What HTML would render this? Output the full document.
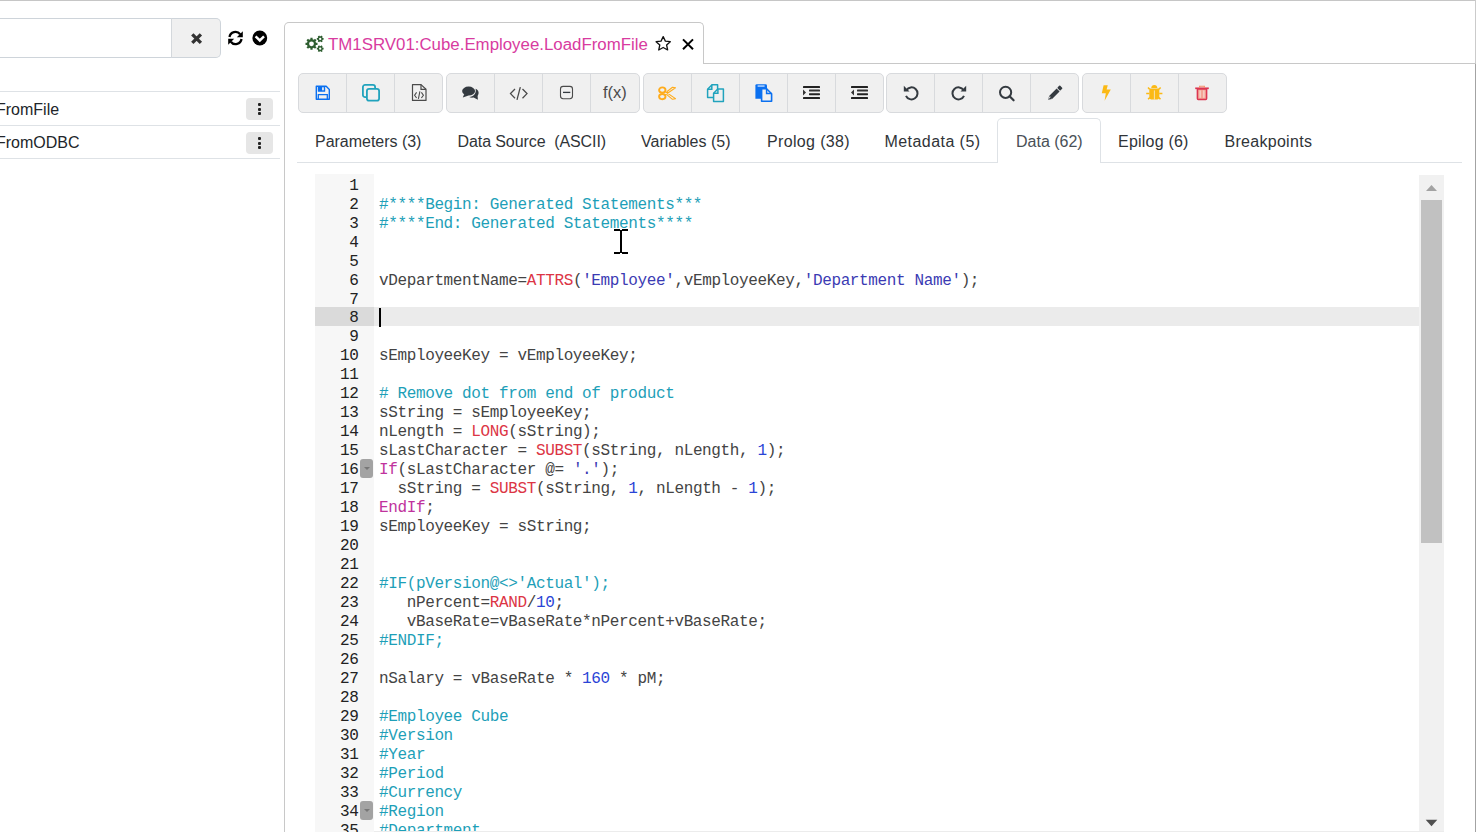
<!DOCTYPE html>
<html><head><meta charset="utf-8">
<style>
*{box-sizing:border-box;margin:0;padding:0}
html,body{width:1476px;height:832px;overflow:hidden;background:#fff;position:relative;font-family:"Liberation Sans",sans-serif;color:#212529}
.a{position:absolute}
.topline{left:0;top:0;width:1476px;height:1px;background:#c6c6c6}
.search{left:-200px;top:18px;width:372px;height:40px;border:1px solid #ced4da;background:#fff}
.xbtn{left:171px;top:18px;width:50px;height:40px;border:1px solid #ced4da;border-left:1px solid #d4d8dc;background:#f0f0f0;border-radius:0 5px 5px 0}
.rowline{left:0;width:280px;height:1px;background:#dee2e6}
.rowtxt{left:-4px;margin-top:1px;font-size:16px;line-height:20px;white-space:pre;color:#212529}
.kebab{left:246px;width:27px;height:22px;background:#e6e6e6;border-radius:4px}
.kebab i{position:absolute;left:12px;width:3px;height:3px;background:#222;border-radius:1px}
.panelL{left:284px;top:63px;width:1px;height:769px;background:#c8c8c8}
.panelR{left:1475px;top:63px;width:1px;height:769px;background:#a3a3a3}.panelR2{left:1475px;top:0;width:1px;height:63px;background:#cbcbcb}
.panelT{left:703px;top:63px;width:773px;height:1px;background:#c8c8c8}
.tab{left:284px;top:22px;width:420px;height:42px;border:1px solid #c8c8c8;border-bottom:none;border-radius:5px 5px 0 0;background:#fff}
.title{left:328px;top:35px;font-size:16.85px;line-height:20px;color:#d83ba0;white-space:pre}
.grp{top:73px;height:40px;background:#f0f0f0;border:1px solid #d8dadd;border-radius:5px}
.div{top:74px;width:1px;height:38px;background:#d8dadd}
.navline{left:297px;top:162px;width:1165px;height:1px;background:#dee2e6}
.acttab{left:997px;top:118px;width:104px;height:45px;border:1px solid #dee2e6;border-bottom:none;border-radius:5px 5px 0 0;background:#fff}
.ntab{top:132px;font-size:16px;line-height:19px;white-space:pre;color:#303438}
.gutter{left:315px;top:174px;width:59px;height:658px;background:#f7f7f7}
.hlg{left:315px;top:307px;width:59px;height:19px;background:#dadada}
.hlc{left:374px;top:307px;width:1045px;height:19px;background:#ebebeb}
.ln{left:315px;width:43.4px;text-align:right;font-family:"Liberation Mono",monospace;font-size:16px;letter-spacing:-0.37px;line-height:19px;color:#222;white-space:pre}
.cl{left:379px;font-family:"Liberation Mono",monospace;font-size:16px;letter-spacing:-0.37px;line-height:19px;color:#444;white-space:pre}
.c{color:#1e9fb8}.f{color:#dc3545}.s{color:#3b3bb3}.n{color:#2a44d6}.k{color:#c0339d}
.fold{left:360px;width:13px;height:19px;background:#a3a3a3;border-radius:3px}
.fold:after{content:"";position:absolute;left:3.8px;top:7.5px;border-left:3.5px solid transparent;border-right:3.5px solid transparent;border-top:3.5px solid #777}
.sbtrack{left:1419px;top:175px;width:25px;height:656px;background:#f1f1f1}
.sbthumb{left:1421px;top:200px;width:21px;height:343px;background:#c1c1c1}
</style></head><body>
<div class="a topline"></div>
<!-- left sidebar -->
<div class="a search"></div>
<div class="a xbtn"></div>
<svg class="a" style="left:190px;top:32px" width="13" height="13" viewBox="0 0 13 13"><path d="M2.3 2.3L10.9 10.9M10.9 2.3L2.3 10.9" stroke="#333" stroke-width="3.3"/></svg>
<svg class="a" style="left:227px;top:30px" width="17" height="16" viewBox="0 0 17 16"><path d="M2.5 7 A6 6 0 0 1 13.2 4.2" fill="none" stroke="#000" stroke-width="2.3"/><path d="M15.8 1.2V7.2H9.8Z" fill="#000"/><path d="M14.5 9 A6 6 0 0 1 3.8 11.8" fill="none" stroke="#000" stroke-width="2.3"/><path d="M1.2 14.8V8.8H7.2Z" fill="#000"/></svg>
<svg class="a" style="left:252px;top:30px" width="16" height="16" viewBox="0 0 16 16"><circle cx="7.8" cy="8" r="7.4" fill="#000"/><path d="M3.6 6.4L7.8 10.4L12 6.4" fill="none" stroke="#fff" stroke-width="2.5"/></svg>

<div class="a rowline" style="top:91px"></div>
<div class="a rowline" style="top:125px"></div>
<div class="a rowline" style="top:158px"></div>
<div class="a rowtxt" style="top:99px">FromFile</div>
<div class="a rowtxt" style="top:132px">FromODBC</div>
<div class="a kebab" style="top:98px"><i style="top:5px"></i><i style="top:9.5px"></i><i style="top:14px"></i></div>
<div class="a kebab" style="top:132px"><i style="top:5px"></i><i style="top:9.5px"></i><i style="top:14px"></i></div>

<!-- panel -->
<div class="a panelL"></div>
<div class="a panelR"></div><div class="a panelR2"></div>
<div class="a panelT"></div>
<div class="a tab"></div>
<!-- gears -->
<svg class="a" style="left:304px;top:35px" width="22" height="19" viewBox="0 0 22 19" id="gears"><path d="M11.97 7.71 L13.50 7.71 L13.50 9.89 L11.97 9.89 L11.75 10.56 L11.43 11.19 L12.52 12.27 L10.97 13.82 L9.89 12.73 L9.26 13.05 L8.59 13.27 L8.59 14.80 L6.41 14.80 L6.41 13.27 L5.74 13.05 L5.11 12.73 L4.03 13.82 L2.48 12.27 L3.57 11.19 L3.25 10.56 L3.03 9.89 L1.50 9.89 L1.50 7.71 L3.03 7.71 L3.25 7.04 L3.57 6.41 L2.48 5.33 L4.03 3.78 L5.11 4.87 L5.74 4.55 L6.41 4.33 L6.41 2.80 L8.59 2.80 L8.59 4.33 L9.26 4.55 L9.89 4.87 L10.97 3.78 L12.52 5.33 L11.43 6.41 L11.75 7.04Z M9.90 8.80 A2.4 2.4 0 1 0 5.10 8.80 A2.4 2.4 0 1 0 9.90 8.80Z M18.66 3.06 L19.59 3.04 L19.59 4.76 L18.66 4.74 L18.45 5.20 L18.16 5.61 L18.64 6.41 L17.15 7.27 L16.70 6.45 L16.20 6.50 L15.70 6.45 L15.25 7.27 L13.76 6.41 L14.24 5.61 L13.95 5.20 L13.74 4.74 L12.81 4.76 L12.81 3.04 L13.74 3.06 L13.95 2.60 L14.24 2.19 L13.76 1.39 L15.25 0.53 L15.70 1.35 L16.20 1.30 L16.70 1.35 L17.15 0.53 L18.64 1.39 L18.16 2.19 L18.45 2.60Z M17.35 3.90 A1.15 1.15 0 1 0 15.05 3.90 A1.15 1.15 0 1 0 17.35 3.90Z M18.66 12.86 L19.59 12.84 L19.59 14.56 L18.66 14.54 L18.45 15.00 L18.16 15.41 L18.64 16.21 L17.15 17.07 L16.70 16.25 L16.20 16.30 L15.70 16.25 L15.25 17.07 L13.76 16.21 L14.24 15.41 L13.95 15.00 L13.74 14.54 L12.81 14.56 L12.81 12.84 L13.74 12.86 L13.95 12.40 L14.24 11.99 L13.76 11.19 L15.25 10.33 L15.70 11.15 L16.20 11.10 L16.70 11.15 L17.15 10.33 L18.64 11.19 L18.16 11.99 L18.45 12.40Z M17.35 13.70 A1.15 1.15 0 1 0 15.05 13.70 A1.15 1.15 0 1 0 17.35 13.70Z" fill="#2e5e30" fill-rule="evenodd"/></svg>
<div class="a title">TM1SRV01:Cube.Employee.LoadFromFile</div>
<svg class="a" style="left:655px;top:35px" width="17" height="17" viewBox="0 0 17 17"><path d="M8.2 1.6L10.35 6.1L15.3 6.65L11.6 10L12.65 14.95L8.2 12.45L3.75 14.95L4.8 10L1.1 6.65L6.05 6.1Z" fill="none" stroke="#111" stroke-width="1.3" stroke-linejoin="round"/></svg>
<svg class="a" style="left:682px;top:38px" width="12" height="12" viewBox="0 0 12 12"><path d="M1 1.4L11 11.2M11 1.4L1 11.2" stroke="#000" stroke-width="2"/></svg>

<!-- toolbar -->
<div class="a grp" style="left:298px;width:145px"></div>
<div class="a div" style="left:346px"></div><div class="a div" style="left:394px"></div>
<div class="a grp" style="left:446px;width:194px"></div>
<div class="a div" style="left:494px"></div><div class="a div" style="left:542px"></div><div class="a div" style="left:590px"></div>
<div class="a grp" style="left:643px;width:241px"></div>
<div class="a div" style="left:691px"></div><div class="a div" style="left:739px"></div><div class="a div" style="left:787px"></div><div class="a div" style="left:835px"></div>
<div class="a grp" style="left:886px;width:193px"></div>
<div class="a div" style="left:934px"></div><div class="a div" style="left:982px"></div><div class="a div" style="left:1030px"></div>
<div class="a grp" style="left:1082px;width:145px"></div>
<div class="a div" style="left:1130px"></div><div class="a div" style="left:1178px"></div>
<svg class="a" style="left:315px;top:85px" width="16" height="16" viewBox="0 0 16 16"><path d="M1.3 1.3H11.2L14.3 4.4V14.3H1.3Z" fill="none" stroke="#0b70f0" stroke-width="1.4" stroke-linejoin="round"/><path d="M2.8 1.6H10.2V6.2Q10.2 6.8 9.6 6.8H3.4Q2.8 6.8 2.8 6.2Z" fill="#0b70f0"/><rect x="7.1" y="2.3" width="1.7" height="3" fill="#f0f0f0"/><path d="M3.3 14.2V9.7H12.3V14.2" fill="none" stroke="#0b70f0" stroke-width="1.3"/></svg><svg class="a" style="left:361px;top:83px" width="20" height="20" viewBox="0 0 20 20"><rect x="1.9" y="1.9" width="12.2" height="12.2" rx="2.2" fill="none" stroke="#21a3bd" stroke-width="1.8"/><rect x="5.9" y="5.9" width="12.2" height="11.8" rx="2.2" fill="#f0f0f0" stroke="#21a3bd" stroke-width="1.8"/></svg><svg class="a" style="left:411px;top:83px" width="17" height="19" viewBox="0 0 17 19"><path d="M1.5 1.6H10L15 6.3V17.4H1.5Z" fill="none" stroke="#4a4a4a" stroke-width="1.2" stroke-linejoin="round"/><path d="M10 1.6V6.3H15" fill="none" stroke="#4a4a4a" stroke-width="1.2"/><path d="M5.6 9.4L3.6 12.2L5.6 15M10.4 9.4L12.4 12.2L10.4 15M8.9 8.4L7.4 15.9" fill="none" stroke="#4a4a4a" stroke-width="1.1"/></svg><svg class="a" style="left:461px;top:86px" width="19" height="15" viewBox="0 0 19 15"><ellipse cx="7.6" cy="5.1" rx="6.5" ry="4.5" fill="#343a40"/><path d="M3.2 8L1.8 11.6L7.6 9.4Z" fill="#343a40"/><path d="M14.6 2.8C17.6 4 18.6 7.2 16.6 9.9L16.9 13.8L12.6 11.6C11 11.9 9.4 11.7 8.2 11C12.6 10.8 15.6 7.4 14.6 2.8Z" fill="#343a40"/></svg><svg class="a" style="left:509px;top:86px" width="20" height="15" viewBox="0 0 20 15"><path d="M6 3L1.5 7.6L6 12.2M13.5 3L18 7.6L13.5 12.2" fill="none" stroke="#4a4a4a" stroke-width="1.3"/><path d="M11.3 1.2L8 13.8" stroke="#4a4a4a" stroke-width="1.3"/></svg><svg class="a" style="left:559px;top:85px" width="15" height="15" viewBox="0 0 15 15"><rect x="1.5" y="1.4" width="12" height="12.3" rx="2.6" fill="none" stroke="#4a4a4a" stroke-width="1.1"/><path d="M4 7.4H11.3" stroke="#343a40" stroke-width="1.3"/></svg><div class="a" style="left:603px;top:82px;font-size:16.5px;line-height:20px;color:#4a4a4a;white-space:pre">f(x)</div><svg class="a" style="left:658px;top:86px" width="19" height="15" viewBox="0 0 19 15"><ellipse cx="4.3" cy="4" rx="3.2" ry="2.6" fill="none" stroke="#ffac1c" stroke-width="1.9"/><ellipse cx="4.3" cy="10.6" rx="3.2" ry="2.6" fill="none" stroke="#ffac1c" stroke-width="1.9"/><path d="M7 5.5L17.5 12.6L14.5 13.3L8.8 8.6M7 9L17.5 1.8L14.5 1.2L8.8 5.8" fill="none" stroke="#ffac1c" stroke-width="1.1" stroke-linejoin="round"/></svg><svg class="a" style="left:706px;top:83px" width="19" height="20" viewBox="0 0 19 20"><path d="M1.6 6.2L6 1.8H11.6V14.6H1.6Z" fill="none" stroke="#21a3bd" stroke-width="1.5" stroke-linejoin="round"/><path d="M1.6 6.2H5.8V1.8" fill="none" stroke="#21a3bd" stroke-width="1.5"/><path d="M7.6 10.2L11.8 5.9H17.4V18.4H7.6Z" fill="#f0f0f0" stroke="#21a3bd" stroke-width="1.5" stroke-linejoin="round"/><path d="M7.6 10.2H11.9V5.9" fill="none" stroke="#21a3bd" stroke-width="1.5"/></svg><svg class="a" style="left:754px;top:83px" width="20" height="20" viewBox="0 0 20 20"><path d="M1.4 2.6Q1.4 1.2 2.8 1.2H11.6Q13 1.2 13 2.6V15.7H1.4Z" fill="#0b70f0"/><rect x="3.6" y="2.4" width="7" height="1.3" fill="#cfe3ff"/><path d="M7.6 5.8H12.6L17.6 10.8V18.2H7.6Z" fill="#f0f0f0" stroke="#0b70f0" stroke-width="1.6" stroke-linejoin="round"/><path d="M12.6 5.8V10.6H17.6" fill="none" stroke="#0b70f0" stroke-width="1.5"/></svg><svg class="a" style="left:802px;top:85px" width="19" height="15" viewBox="0 0 19 15"><rect x="1" y="1" width="17" height="2" rx="0.6" fill="#222"/><rect x="7" y="4.6" width="11" height="2" rx="0.6" fill="#333"/><rect x="7" y="8.2" width="11" height="2" rx="0.6" fill="#222"/><rect x="1" y="12" width="17" height="2" rx="0.6" fill="#222"/><path d="M1 4.4L4 7.5L1 10.6Z" fill="#333"/></svg><svg class="a" style="left:850px;top:85px" width="19" height="15" viewBox="0 0 19 15"><rect x="1" y="1" width="17" height="2" rx="0.6" fill="#222"/><rect x="7" y="4.6" width="11" height="2" rx="0.6" fill="#333"/><rect x="7" y="8.2" width="11" height="2" rx="0.6" fill="#222"/><rect x="1" y="12" width="17" height="2" rx="0.6" fill="#222"/><path d="M4 4.4L1 7.5L4 10.6Z" fill="#333"/></svg><svg class="a" style="left:903px;top:85px" width="16" height="16" viewBox="0 0 16 16"><path d="M3.4 5.2A6 6 0 1 1 3 10.8" fill="none" stroke="#343a40" stroke-width="2"/><path d="M0.8 0.8V6.5H6.5Z" fill="#343a40"/></svg><svg class="a" style="left:951px;top:85px" width="16" height="16" viewBox="0 0 16 16"><path d="M12.6 5.2A6 6 0 1 0 13 10.8" fill="none" stroke="#343a40" stroke-width="2"/><path d="M15.2 0.8V6.5H9.5Z" fill="#343a40"/></svg><svg class="a" style="left:998px;top:85px" width="18" height="17" viewBox="0 0 18 17"><circle cx="7.6" cy="7.3" r="5.6" fill="none" stroke="#343a40" stroke-width="2"/><path d="M11.6 11.3L15.6 15.3" stroke="#343a40" stroke-width="2.2" stroke-linecap="round"/></svg><svg class="a" style="left:1047px;top:85px" width="16" height="16" viewBox="0 0 16 16"><g transform="translate(1.2 14.8) rotate(-45)"><path d="M0 0L3.4 -2.1V2.1Z" fill="#343a40"/><rect x="3.4" y="-2.1" width="10.6" height="4.2" fill="#343a40"/><rect x="14.8" y="-2.1" width="3.6" height="4.2" rx="0.8" fill="#343a40"/><path d="M1.2 -0.3L3.6 -1" stroke="#f0f0f0" stroke-width="0.8"/></g></svg><svg class="a" style="left:1101px;top:84px" width="11" height="18" viewBox="0 0 11 18"><path d="M2.6 1.2H6.8L5.6 5.6H9.8L3.6 16.8L4.8 9.3H0.8Z" fill="#fbb914"/></svg><svg class="a" style="left:1145px;top:84px" width="18" height="17" viewBox="0 0 18 17"><path d="M6.2 3.9Q6.5 1 9.3 1Q12.1 1 12.4 3.9Z" fill="#fbb914"/><path d="M4.3 4.4H14.3V13.2Q14.3 15.6 11 15.6H7.6Q4.3 15.6 4.3 13.2Z" fill="#fbb914"/><rect x="8.9" y="6.4" width="0.9" height="9.2" fill="#f6e7c0"/><path d="M4.6 5.2L3 3.4M14 5.2L15.6 3.4M4.4 9.4H1.2M14.2 9.4H17.4M4.8 13.4L3.1 15.3M13.8 13.4L15.5 15.3" stroke="#fbb914" stroke-width="1.5"/></svg><svg class="a" style="left:1194px;top:85px" width="16" height="16" viewBox="0 0 16 16"><path d="M1.2 3.3H14.8" stroke="#dc3652" stroke-width="1.7"/><path d="M5.6 3V1.3H10.4V3" fill="none" stroke="#f5906a" stroke-width="1.1"/><path d="M3.4 4V13.6Q3.4 14.4 4.2 14.4H11.8Q12.6 14.4 12.6 13.6V4Z" fill="#f4a495" stroke="#dc3652" stroke-width="1.5"/><path d="M6.1 5.4V12.8M9.9 5.4V12.8" stroke="#f7ede8" stroke-width="0.9"/></svg>

<!-- nav tabs -->
<div class="a navline"></div>
<div class="a acttab"></div>
<div class="a ntab" style="left:315px;letter-spacing:-0.02px">Parameters (3)</div>
<div class="a ntab" style="left:457.5px;letter-spacing:-0.09px">Data Source  (ASCII)</div>
<div class="a ntab" style="left:641px">Variables (5)</div>
<div class="a ntab" style="left:767px;letter-spacing:0.35px">Prolog (38)</div>
<div class="a ntab" style="left:884.5px;letter-spacing:0.44px">Metadata (5)</div>
<div class="a ntab" style="left:1016px;color:#495057">Data (62)</div>
<div class="a ntab" style="left:1118px;letter-spacing:0.21px">Epilog (6)</div>
<div class="a ntab" style="left:1224.5px;letter-spacing:0.29px">Breakpoints</div>

<!-- editor -->
<div class="a gutter"></div>
<div class="a hlg"></div>
<div class="a hlc"></div>
<div class="a ln" style="top:176.70px">1</div><div class="a ln" style="top:195.67px">2</div><div class="a cl" style="top:195.67px"><span class="c">#****Begin: Generated Statements***</span></div><div class="a ln" style="top:214.64px">3</div><div class="a cl" style="top:214.64px"><span class="c">#****End: Generated Statements****</span></div><div class="a ln" style="top:233.61px">4</div><div class="a ln" style="top:252.58px">5</div><div class="a ln" style="top:271.55px">6</div><div class="a cl" style="top:271.55px">vDepartmentName=<span class="f">ATTRS</span>(<span class="s">&#x27;Employee&#x27;</span>,vEmployeeKey,<span class="s">&#x27;Department Name&#x27;</span>);</div><div class="a ln" style="top:290.52px">7</div><div class="a ln" style="top:309.49px">8</div><div class="a ln" style="top:328.46px">9</div><div class="a ln" style="top:347.43px">10</div><div class="a cl" style="top:347.43px">sEmployeeKey = vEmployeeKey;</div><div class="a ln" style="top:366.40px">11</div><div class="a ln" style="top:385.37px">12</div><div class="a cl" style="top:385.37px"><span class="c"># Remove dot from end of product</span></div><div class="a ln" style="top:404.34px">13</div><div class="a cl" style="top:404.34px">sString = sEmployeeKey;</div><div class="a ln" style="top:423.31px">14</div><div class="a cl" style="top:423.31px">nLength = <span class="f">LONG</span>(sString);</div><div class="a ln" style="top:442.28px">15</div><div class="a cl" style="top:442.28px">sLastCharacter = <span class="f">SUBST</span>(sString, nLength, <span class="n">1</span>);</div><div class="a ln" style="top:461.25px">16</div><div class="a cl" style="top:461.25px"><span class="k">If</span>(sLastCharacter @= <span class="s">&#x27;.&#x27;</span>);</div><div class="a ln" style="top:480.22px">17</div><div class="a cl" style="top:480.22px">  sString = <span class="f">SUBST</span>(sString, <span class="n">1</span>, nLength - <span class="n">1</span>);</div><div class="a ln" style="top:499.19px">18</div><div class="a cl" style="top:499.19px"><span class="k">EndIf</span>;</div><div class="a ln" style="top:518.16px">19</div><div class="a cl" style="top:518.16px">sEmployeeKey = sString;</div><div class="a ln" style="top:537.13px">20</div><div class="a ln" style="top:556.10px">21</div><div class="a ln" style="top:575.07px">22</div><div class="a cl" style="top:575.07px"><span class="c">#IF(pVersion@&lt;&gt;&#x27;Actual&#x27;);</span></div><div class="a ln" style="top:594.04px">23</div><div class="a cl" style="top:594.04px">   nPercent=<span class="f">RAND</span>/<span class="n">10</span>;</div><div class="a ln" style="top:613.01px">24</div><div class="a cl" style="top:613.01px">   vBaseRate=vBaseRate*nPercent+vBaseRate;</div><div class="a ln" style="top:631.98px">25</div><div class="a cl" style="top:631.98px"><span class="c">#ENDIF;</span></div><div class="a ln" style="top:650.95px">26</div><div class="a ln" style="top:669.92px">27</div><div class="a cl" style="top:669.92px">nSalary = vBaseRate * <span class="n">160</span> * pM;</div><div class="a ln" style="top:688.89px">28</div><div class="a ln" style="top:707.86px">29</div><div class="a cl" style="top:707.86px"><span class="c">#Employee Cube</span></div><div class="a ln" style="top:726.83px">30</div><div class="a cl" style="top:726.83px"><span class="c">#Version</span></div><div class="a ln" style="top:745.80px">31</div><div class="a cl" style="top:745.80px"><span class="c">#Year</span></div><div class="a ln" style="top:764.77px">32</div><div class="a cl" style="top:764.77px"><span class="c">#Period</span></div><div class="a ln" style="top:783.74px">33</div><div class="a cl" style="top:783.74px"><span class="c">#Currency</span></div><div class="a ln" style="top:802.71px">34</div><div class="a cl" style="top:802.71px"><span class="c">#Region</span></div><div class="a ln" style="top:821.68px">35</div><div class="a cl" style="top:821.68px"><span class="c">#Department</span></div><div class="a fold" style="top:459px"></div><div class="a fold" style="top:801px"></div><div class="a" style="left:379px;top:308px;width:2px;height:19px;background:#000"></div><div class="a" style="left:374px;top:831px;width:1070px;height:1px;background:#ececec"></div><svg class="a" style="left:613px;top:228px" width="16" height="27" viewBox="0 0 16 27"><path d="M1 2H7M9 2H15M1 25H7M9 25H15" stroke="#000" stroke-width="2"/><path d="M8 2V25" stroke="#000" stroke-width="2"/><path d="M6.5 2.5Q8 3 8 4M9.5 2.5Q8 3 8 4M6.5 24.5Q8 24 8 23M9.5 24.5Q8 24 8 23" stroke="#000" stroke-width="1" fill="none"/></svg>
<div class="a sbtrack"></div>
<div class="a sbthumb"></div>
<svg class="a" style="left:1425px;top:184px" width="13" height="8" viewBox="0 0 13 8"><path d="M1 7H12L6.5 1Z" fill="#a3a3a3"/></svg><svg class="a" style="left:1425px;top:819px" width="13" height="8" viewBox="0 0 13 8"><path d="M0.7 0.7H12.3L6.5 7.2Z" fill="#505050"/></svg></body></html>
